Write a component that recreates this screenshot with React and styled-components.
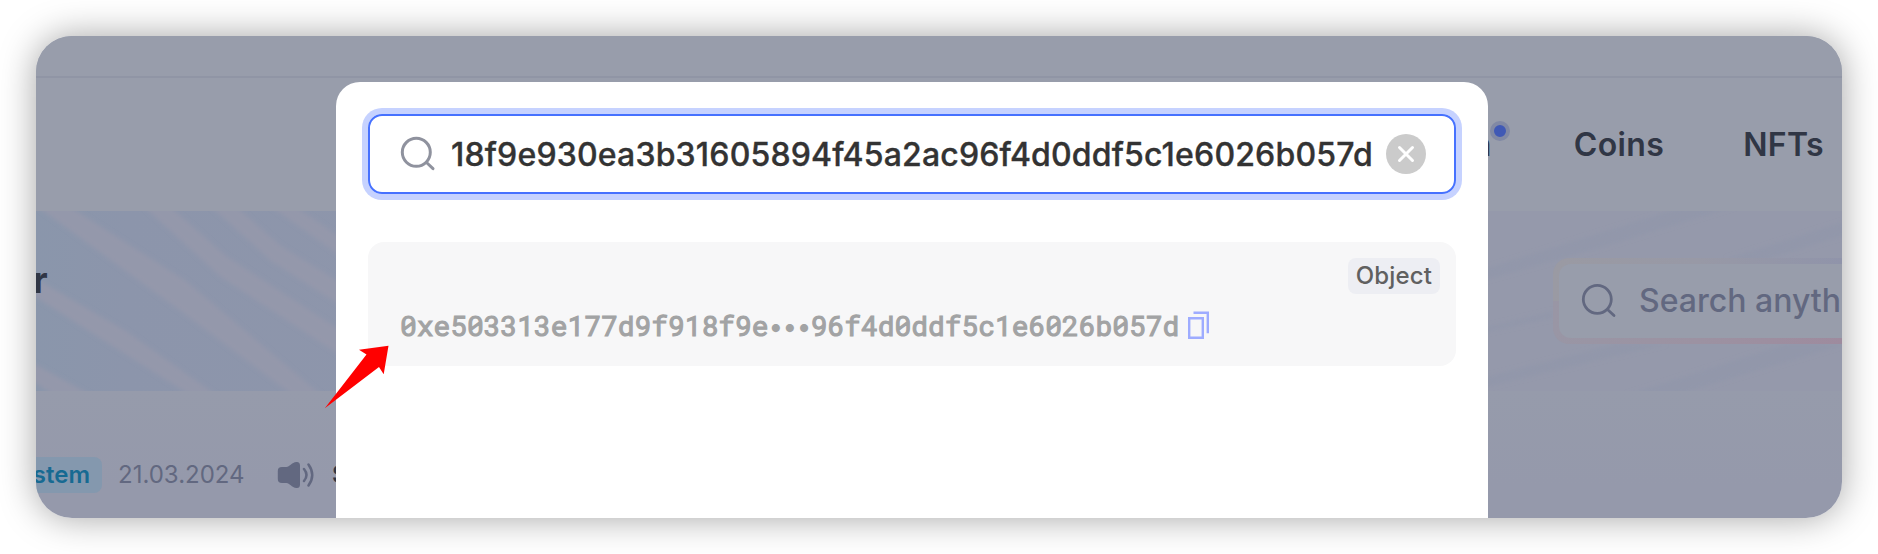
import React from 'react';
import styled, { createGlobalStyle } from 'styled-components';

const Global = createGlobalStyle`
  *, *::before, *::after { box-sizing: border-box; }
  body { margin: 0; background: #fff; font-family: Inter, "Liberation Sans", sans-serif; font-optical-sizing: none; }
  svg { flex: none; }
`;

const Stage = styled.div`
  width: 1878px;
  height: 554px;
  padding: 36px;
  overflow: hidden;
`;

const Window = styled.div`
  position: relative;
  width: 1806px;
  height: 482px;
  border-radius: 36px;
  box-shadow: 0 0 36px rgba(0, 0, 0, 0.36);
`;

const Page = styled.div`
  height: 100%;
  display: flex;
  flex-direction: column;
  overflow: hidden;
  border-radius: 36px;
  background: linear-gradient(#969bab 355px, #9599ab 450px);
`;

const TopBar = styled.div`
  flex: none;
  height: 42px;
  background: #989dab;
  border-bottom: 2px solid #9095a5;
`;

const Nav = styled.nav`
  flex: none;
  height: 133px;
  padding: 0 18px 0 0;
  display: flex;
  align-items: center;
  justify-content: flex-end;
  gap: 79px;
  background: #989dab;
`;

const NavItem = styled.span`
  position: relative;
  margin-right: ${({ $dot }) => ($dot ? '3px' : 0)};
  font-size: 32px;
  line-height: 40px;
  font-weight: 600;
  letter-spacing: 0.35px;
  color: #303645;
`;

const NavDot = styled.i`
  position: absolute;
  right: -18px;
  top: -4px;
  width: 20px;
  height: 20px;
  border-radius: 50%;
  background: #4059b5;
  border: 4px solid #8189a5;
`;

const Banner = styled.section`
  position: relative;
  flex: none;
  height: 180px;
  display: flex;
  justify-content: space-between;
  overflow: hidden;
`;

const BannerArt = styled.svg`
  position: absolute;
  inset: 0;
`;

const Heading = styled.h1`
  position: relative;
  margin: 45px 0 0 -3px;
  font-size: 36px;
  line-height: 48px;
  font-weight: 700;
  color: #303645;
`;

const HeroSearch = styled.div`
  position: relative;
  flex: none;
  width: 289px;
  height: 86px;
  margin-top: 47px;
  padding: 6px 0 6px 6px;
  border-radius: 16px 0 0 16px;
  background:
    linear-gradient(90deg, #9996a5 0%, #9c92a2 50%, #9e8b9e 100%) bottom / 100% 43px no-repeat,
    linear-gradient(90deg, #9a9aa3 0%, #9899a6 50%, #9094aa 100%) top / 100% 43px no-repeat;
`;

const HeroField = styled.div`
  height: 74px;
  padding: 0 0 1px 22px;
  display: flex;
  align-items: center;
  gap: 22px;
  overflow: hidden;
  white-space: nowrap;
  border-radius: 12px 0 0 12px;
  background: #989dab;
  color: #626880;
  font-size: 32px;
  font-weight: 500;
`;

const News = styled.div`
  flex: 1;
  display: flex;
  align-items: flex-start;
  padding-top: 66px;
  white-space: nowrap;
`;

const Tag = styled.span`
  height: 36px;
  flex: none;
  display: flex;
  align-items: center;
  justify-content: flex-end;
  width: 66px;
  padding: 0 12px 1px 0;
  overflow: hidden;
  border-radius: 0 8px 8px 0;
  background: #8498ae;
  color: #176a92;
  font-size: 24px;
  font-weight: 600;
`;

const NewsDate = styled.span`
  margin-left: 16px;
  width: 122px;
  line-height: 36px;
  font-size: 24px;
  color: #626880;
`;

const Speaker = styled.span`
  display: flex;
  margin: 2px 0 0 36px;
`;

const NewsTitle = styled.span`
  margin-left: 16px;
  line-height: 36px;
  font-size: 24px;
  font-weight: 600;
  color: #303645;
`;

const Modal = styled.div`
  position: absolute;
  left: 300px;
  top: 46px;
  width: 1152px;
  height: 436px;
  padding: 32px 32px 0;
  display: flex;
  flex-direction: column;
  gap: 48px;
  border-radius: 24px 24px 0 0;
  background: #fff;
`;

const SearchField = styled.div`
  height: 80px;
  padding: 0 28px 0 30px;
  display: flex;
  align-items: center;
  border: 2px solid #4671ff;
  border-radius: 14px;
  box-shadow: 0 0 0 6px #c6d2ff;
`;

const Query = styled.span`
  margin-left: 15px;
  padding-top: 2px;
  flex: 1;
  min-width: 0;
  font-size: 32px;
  line-height: 40px;
  font-weight: 500;
  letter-spacing: 0.175px;
  -webkit-text-stroke: 0.35px #333;
  color: #333;
  white-space: nowrap;
`;

const Result = styled.div`
  height: 124px;
  padding: 16px 16px 0 32px;
  display: flex;
  flex-direction: column;
  border-radius: 16px;
  background: #f7f7f8;
`;

const Kind = styled.span`
  align-self: flex-end;
  height: 36px;
  padding: 0 8px;
  line-height: 35px;
  border-radius: 8px;
  background: #edeef3;
  color: #606060;
  font-size: 24px;
  font-weight: 500;
  letter-spacing: 0.15px;
`;

const HashRow = styled.div`
  margin-top: 13px;
  height: 38px;
  display: flex;
  align-items: center;
  gap: 8px;
`;

const Hash = styled.span`
  font-family: "Roboto Mono", "DejaVu Sans Mono", monospace;
  font-size: 28px;
  line-height: 38px;
  letter-spacing: -0.055px;
  -webkit-text-stroke: 1.1px #a2a3a4;
  color: #a2a3a4;
  white-space: nowrap;
`;

const Dots = styled.span`
  font-family: Inter, sans-serif;
  font-size: 26px;
  line-height: 1;
  letter-spacing: -0.5px;
  -webkit-text-stroke: 0;
`;

const Pointer = styled.svg`
  position: absolute;
  left: 288px;
  top: 309px;
`;

const SearchIcon = ({ color, width }) => (
  <svg width="36" height="36" viewBox="0 0 36 36" fill="none" stroke={color} strokeWidth={width} strokeLinecap="round">
    <circle cx="16.3" cy="16.3" r="14" />
    <path d="M26.5 26.5 33 32.6" />
  </svg>
);

const ClearIcon = () => (
  <svg width="40" height="40" viewBox="0 0 40 40">
    <circle cx="20" cy="20" r="20" fill="#cbcbcb" />
    <path d="m13.5 13.5 13 13m0-13-13 13" stroke="#fff" strokeWidth="3" strokeLinecap="round" />
  </svg>
);

const CopyIcon = () => (
  <svg width="24" height="30" viewBox="0 0 24 30" fill="none" stroke="#9eacff" strokeWidth="2.4">
    <path d="M2.2 7.2h13.6v19.6H2.2z" />
    <path d="M6.5 1.8h14.3v20.400" />
  </svg>
);

const SpeakerIcon = () => (
  <svg width="40" height="34" viewBox="0 0 40 34">
    <path
      d="M6 8h4.500c3 0 5-4.500 10-5 2.300-.2 3.500 1 3.500 3.500v19c0 2.500-1.200 3.700-3.500 3.500-5-.5-7-5-10-5H6c-3 0-4.200-1.500-4.200-4v-8C1.800 9.500 3 8 6 8z"
      fill="#626880"
    />
    <path d="M28 10q5 6 0 12M32.500 5.500q7.500 10.500 0 21" fill="none" stroke="#626880" strokeWidth="2.500" strokeLinecap="round" />
  </svg>
);

const BandArt = () => (
  <BannerArt width="1806" height="180" viewBox="0 0 1806 180">
    <defs>
      <linearGradient id="bg">
        <stop offset="0" stopColor="#8a96ab" />
        <stop offset=".05" stopColor="#8c95ab" />
        <stop offset=".8" stopColor="#9599ab" />
        <stop offset="1" stopColor="#9599ab" />
      </linearGradient>
      <filter id="soft" x="-5%" y="-10%" width="110%" height="120%">
        <feGaussianBlur stdDeviation="2" />
      </filter>
    </defs>
    <rect width="1806" height="180" fill="url(#bg)" />
    <g fill="#9498ab" filter="url(#soft)">
      <path d="M-4 -8H28L150 70 290 188H262L150 104Z" />
      <path d="M104 -8H130L190 45 310 123V148L185 66Z" />
      <path d="M171 -8H196L245 35 310 75V98L235 50Z" />
      <path d="M230 -8H254L310 30V49Z" />
      <path d="M-10 62V80L160 188H186L90 120Z" />
      <path d="M-10 148V166L24 188H62Z" />
    </g>
    <g fill="#9297aa" filter="url(#soft)">
      <path d="M1442 60 1560 23 1660 -8H1710L1560 38 1442 71Z" />
      <path d="M1442 118 1517 100V107L1442 123Z" />
      <path d="M1442 168 1580 133H1630L1442 178Z" />
      <path d="M1690 48 1816 8V22L1725 50Z" />
      <path d="M1590 184 1750 133H1810L1640 184Z" />
    </g>
  </BannerArt>
);

export default function App() {
  return (
    <Stage>
      <Global />
      <Window>
        <Page>
          <TopBar />
          <Nav>
            <NavItem $dot>
              n
              <NavDot />
            </NavItem>
            <NavItem>Coins</NavItem>
            <NavItem>NFTs</NavItem>
          </Nav>
          <Banner>
            <BandArt />
            <Heading>r</Heading>
            <HeroSearch>
              <HeroField>
                <SearchIcon color="#626880" width="2.800" />
                <span>Search anyth</span>
              </HeroField>
            </HeroSearch>
          </Banner>
          <News>
            <Tag>stem</Tag>
            <NewsDate>21.03.2024</NewsDate>
            <Speaker>
              <SpeakerIcon />
            </Speaker>
            <NewsTitle>S</NewsTitle>
          </News>
        </Page>
        <Modal>
          <SearchField>
            <SearchIcon color="#8f929e" width="3" />
            <Query>18f9e930ea3b31605894f45a2ac96f4d0ddf5c1e6026b057d</Query>
            <ClearIcon />
          </SearchField>
          <Result>
            <Kind>Object</Kind>
            <HashRow>
              <Hash>
                0xe503313e177d9f918f9e<Dots>•••</Dots>96f4d0ddf5c1e6026b057d
              </Hash>
              <CopyIcon />
            </HashRow>
          </Result>
        </Modal>
        <Pointer width="68" height="66" viewBox="0 0 68 66">
          <path d="M.8 63.200 42.500 9.500 35 4.800 64.500 .7 59.700 29.300 55 22Z" fill="#f00" />
        </Pointer>
      </Window>
    </Stage>
  );
}
